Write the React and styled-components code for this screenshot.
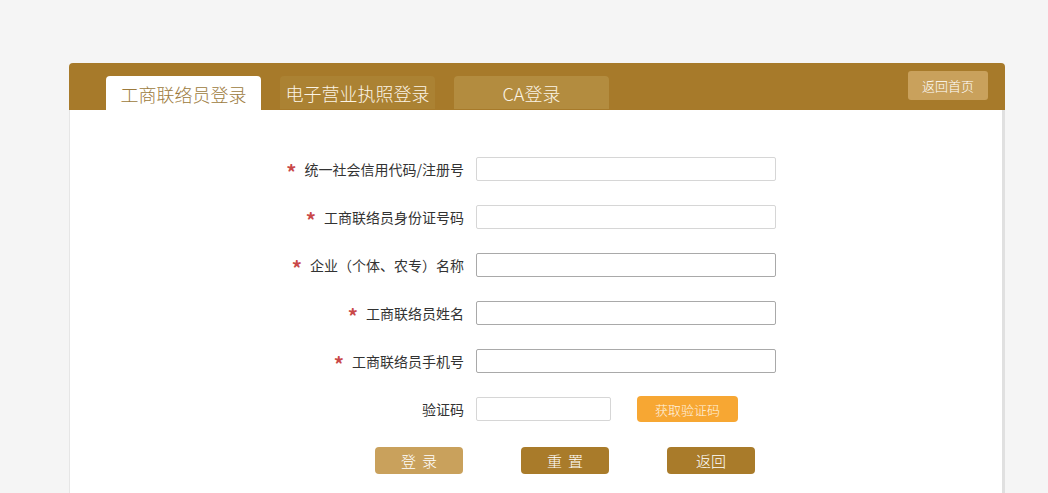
import React from "react";
import styled, { createGlobalStyle } from "styled-components";

const fields = [
  { label: "统一社会信用代码/注册号", required: true, tone: "light" },
  { label: "工商联络员身份证号码", required: true, tone: "light" },
  { label: "企业（个体、农专）名称", required: true, tone: "dark" },
  { label: "工商联络员姓名", required: true, tone: "dark" },
  { label: "工商联络员手机号", required: true, tone: "dark" },
];

const tabs = [
  { name: "工商联络员登录", active: true },
  { name: "电子营业执照登录", shade: "#ab8233" },
  { name: "CA登录", shade: "#b38c3f" },
];

const App = () => {
  return (
    <>
      <GlobalStyle />
      <Page>
        <Panel>
          <Header>
            <Tabs>
              {tabs.map((t) => (
                <Tab key={t.name} $active={t.active} $shade={t.shade}>
                  {t.name}
                </Tab>
              ))}
            </Tabs>
            <HomeButton>返回首页</HomeButton>
          </Header>
          <Body>
            <Form>
              {fields.map((f) => (
                <Row key={f.label}>
                  <Label>
                    {f.required && <Star>*</Star>}
                    {f.label}
                  </Label>
                  <Input $tone={f.tone} />
                </Row>
              ))}
              <Row>
                <Label>验证码</Label>
                <Input $tone="light" $width={135} />
                <CodeButton>获取验证码</CodeButton>
              </Row>
            </Form>
            <Actions>
              <ActionButton $bg="#c9a15c" $spaced>登录</ActionButton>
              <ActionButton $bg="#a97b2a" $spaced>重置</ActionButton>
              <ActionButton $bg="#a97b2a">返回</ActionButton>
            </Actions>
          </Body>
        </Panel>
      </Page>
    </>
  );
};

const GlobalStyle = createGlobalStyle`
  html, body {
    margin: 0;
    padding: 0;
    background: #f5f5f5;
    font-family: "Noto Sans CJK SC", "Noto Sans", sans-serif;
    overflow: hidden;
  }
`;

const Page = styled.div`
  height: 493px;
  padding-top: 63px;
  box-sizing: border-box;
`;

const Panel = styled.div`
  margin-left: 69px;
  width: 936px;
  height: 430px;
  display: flex;
  flex-direction: column;
`;

const Header = styled.div`
  height: 47px;
  background: #a77a2a;
  border-radius: 4px 4px 0 0;
  display: flex;
  align-items: flex-start;
  justify-content: space-between;
  padding: 0 17px 0 37px;
`;

const Tabs = styled.div`
  display: flex;
  gap: 19px;
  align-self: flex-end;
`;

const Tab = styled.div`
  width: 155px;
  height: ${({ $active }) => ($active ? 34 : 33)}px;
  border-radius: 4px 4px 0 0;
  background: ${({ $active, $shade }) => ($active ? "#ffffff" : $shade)};
  color: ${({ $active }) => ($active ? "#9c7a3c" : "#fbf4e6")};
  font-size: 18px;
  font-weight: 300;
  display: flex;
  align-items: center;
  justify-content: center;
  padding-top: 1px;
  box-sizing: border-box;
`;

const HomeButton = styled.div`
  margin-top: 8px;
  width: 80px;
  height: 29px;
  border-radius: 3px;
  background: #c9a15c;
  color: #fff;
  font-size: 13px;
  font-weight: 300;
  display: flex;
  align-items: center;
  justify-content: center;
`;

const Body = styled.div`
  flex: 1;
  background: #fff;
  border-left: 1px solid #e6e6e6;
  border-right: 3px solid #e0e0e0;
  padding-top: 47px;
`;

const Form = styled.div`
  display: flex;
  flex-direction: column;
  gap: 24px;
`;

const Row = styled.div`
  display: flex;
  align-items: center;
  height: 24px;
`;

const Label = styled.div`
  width: 200px;
  margin-left: 194px;
  margin-right: 12px;
  text-align: right;
  font-size: 14px;
  color: #333;
  white-space: nowrap;
  display: flex;
  justify-content: flex-end;
  align-items: center;
`;

const Star = styled.span`
  color: #c94848;
  font-size: 20px;
  font-weight: bold;
  margin-right: 8px;
  line-height: 1;
  padding-top: 6px;
`;

const Input = styled.input`
  width: ${({ $width }) => $width || 300}px;
  height: 24px;
  box-sizing: border-box;
  border: 1px solid ${({ $tone }) => ($tone === "dark" ? "#a9a9a9" : "#d6d6d6")};
  border-radius: 2px;
  background: #fff;
  outline: none;
`;

const CodeButton = styled.div`
  margin-left: 26px;
  width: 101px;
  height: 26px;
  border-radius: 4px;
  background: #f7a733;
  color: #fff4e0;
  font-size: 13px;
  font-weight: 300;
  display: flex;
  align-items: center;
  justify-content: center;
`;

const Actions = styled.div`
  display: flex;
  gap: 58px;
  margin: 26px 0 0 305px;
`;

const ActionButton = styled.div`
  width: 88px;
  height: 27px;
  border-radius: 4px;
  background: ${({ $bg }) => $bg};
  color: #fff;
  font-size: 15px;
  font-weight: 300;
  letter-spacing: ${({ $spaced }) => ($spaced ? "6px" : "0")};
  text-indent: ${({ $spaced }) => ($spaced ? "6px" : "0")};
  display: flex;
  align-items: center;
  justify-content: center;
`;

export default App;
